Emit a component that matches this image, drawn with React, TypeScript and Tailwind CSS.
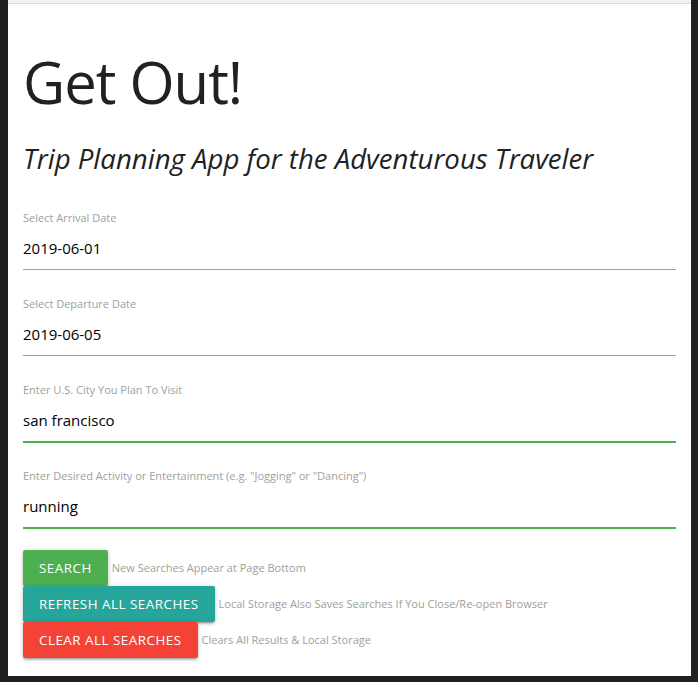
import React from "react";

const fields = [
  { label: "Select Arrival Date", value: "2019-06-01", valid: false },
  { label: "Select Departure Date", value: "2019-06-05", valid: false },
  { label: "Enter U.S. City You Plan To Visit", value: "san francisco", valid: true },
  {
    label: 'Enter Desired Activity or Entertainment (e.g. "Jogging" or "Dancing")',
    value: "running",
    valid: true,
  },
];

const buttons = [
  { text: "Search", note: "New Searches Appear at Page Bottom", color: "bg-[#4caf50]" },
  {
    text: "Refresh All Searches",
    note: "Local Storage Also Saves Searches If You Close/Re-open Browser",
    color: "bg-[#26a69a]",
  },
  { text: "Clear All Searches", note: "Clears All Results & Local Storage", color: "bg-[#f44336]" },
];

const App = () => {
  return (
    <div className="h-[682px] w-[698px] bg-[#1e2024] pl-[8px] pr-[7px] pb-[6px] font-['Open_Sans',sans-serif]">
      <div className="h-full bg-white flex flex-col">
        <div className="h-[4px] bg-[#f2f2f2] border-b border-[#dadada]" />

        <div className="px-[15px] flex flex-col">
          <h1 className="mt-[40px] text-[58px] leading-[76px] text-[#212121] tracking-[-1px]">Get Out!</h1>
          <h4 className="mt-[18px] text-[27.6px] leading-[40px] italic text-[#212121]">
            Trip Planning App for the Adventurous Traveler
          </h4>

          <div className="mt-[20px] flex flex-col">
            {fields.map((f) => (
              <div key={f.label} className="flex flex-col pt-[13px] pb-[13px]">
                <label className="text-[11px] leading-[14px] text-[#9e9e9e]">{f.label}</label>
                <div className="mt-[13px] text-[15px] leading-[20px] text-black">{f.value}</div>
                <div
                  className={
                    f.valid
                      ? "mt-[11px] h-[2px] bg-[#4caf50]"
                      : "mt-[11px] mb-[1px] h-[1px] bg-[#9e9e9e]"
                  }
                />
              </div>
            ))}
          </div>

          <div className="mt-[8px] flex flex-col">
            {buttons.map((b) => (
              <div key={b.text} className="flex items-center gap-[4px]">
                <button
                  type="button"
                  className={`${b.color} h-[36px] px-[16px] rounded-[2px] text-white text-[13.4px] uppercase tracking-[0.5px] shadow-[0_2px_2px_rgba(0,0,0,0.14),0_3px_1px_-2px_rgba(0,0,0,0.12),0_1px_5px_rgba(0,0,0,0.2)]`}
                >
                  {b.text}
                </button>
                <span className="text-[11px] text-[#9e9e9e]">{b.note}</span>
              </div>
            ))}
          </div>
        </div>
      </div>
    </div>
  );
};

export default App;
